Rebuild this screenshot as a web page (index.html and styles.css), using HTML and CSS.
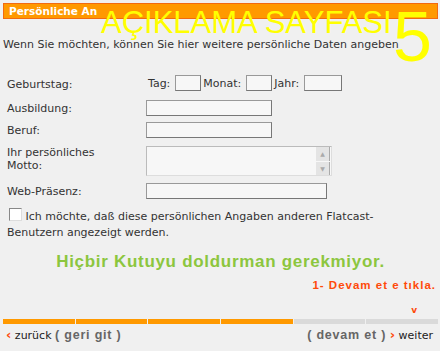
FILE: index.html
```html
<!DOCTYPE html>
<html lang="de">
<head>
  <meta charset="UTF-8">
  <title>Persönliche Angaben</title>
  <link rel="stylesheet" href="styles.css">
</head>
<body>
  <div class="page">
    <div class="titlebar">
      <span class="title">Persönliche An</span>
      <span class="overlay-title">AÇIKLAMA SAYFASI</span>
      <span class="overlay-step">5</span>
    </div>

    <p class="intro">Wenn Sie möchten, können Sie hier weitere persönliche Daten angeben</p>

    <!-- Formular -->
    <form class="form">
      <label>Geburtstag:</label>
      <div class="birth">
        <span>Tag:</span><input type="text" class="box-s">
        <span>Monat:</span><input type="text" class="box-s">
        <span>Jahr:</span><input type="text" class="box-m">
      </div>

      <label>Ausbildung:</label>
      <input type="text" class="box-l">

      <label>Beruf:</label>
      <input type="text" class="box-l">

      <label class="two-line">Ihr persönliches Motto:</label>
      <div class="motto">
        <div class="motto-field"></div>
        <div class="scroll">
          <span class="scroll-btn">▲</span>
          <span class="scroll-btn">▼</span>
        </div>
      </div>

      <label>Web-Präsenz:</label>
      <input type="text" class="box-xl">
    </form>

    <p class="consent"><span class="check"></span> Ich möchte, daß diese persönlichen Angaben anderen Flatcast-Benutzern angezeigt werden.</p>

    <p class="hint">Hiçbir Kutuyu doldurman gerekmiyor.</p>
    <p class="step">1- Devam et e tıkla.</p>

    <div class="marker">v</div>
    <div class="progress">
      <span class="seg done"></span>
      <span class="seg done"></span>
      <span class="seg done"></span>
      <span class="seg done"></span>
      <span class="seg"></span>
      <span class="seg"></span>
    </div>

    <div class="nav">
      <div><span class="chev">‹</span> zurück <b class="tr">( geri git )</b></div>
      <div><b class="tr">( devam et )</b> <span class="chev">›</span> weiter</div>
    </div>
  </div>
</body>
</html>
```

FILE: styles.css
```css
body {
  margin: 0;
  background: #f0f0f0;
  color: #333;
  font-family: "DejaVu Sans", Verdana, sans-serif;
  font-size: 11px;
  overflow: hidden;
}
.page {
  width: 435px;
  padding: 3px 2px 0 3px;
}
.titlebar {
  position: relative;
  height: 14px;
  background: #ff9900;
  border: 1px solid #f26a10;
  line-height: 14px;
}
.title {
  margin-left: 5px;
  color: #fff;
  font-weight: bold;
  font-size: 10.5px;
}
.overlay-title {
  position: absolute;
  left: 97px;
  top: 1px;
  color: #ffff00;
  font-family: "Liberation Sans", Arial, sans-serif;
  font-size: 31px;
  line-height: 36px;
  white-space: nowrap;
}
.overlay-step {
  position: absolute;
  left: 389px;
  top: -7px;
  width: 40px;
  color: #ffff00;
  font-family: "Liberation Sans", Arial, sans-serif;
  font-size: 70px;
  line-height: 80px;
}
.intro {
  margin: 19px 0 0;
  line-height: 14px;
  white-space: nowrap;
}
.form {
  display: grid;
  grid-template-columns: 139px 1fr;
  row-gap: 6px;
  align-items: center;
  margin-top: 23px;
  padding-left: 4px;
}
.form label {
  line-height: 13px;
}
.form .two-line {
  width: 100px;
  align-self: start;
  margin-top: 2px;
}
input {
  height: 16px;
  margin: 0;
  padding: 0;
  box-sizing: border-box;
  background: #f7f7f7;
  border: 1px solid #999;
  border-right-color: #777;
  border-bottom-color: #777;
}
.birth {
  display: flex;
  align-items: center;
  gap: 2px;
  margin-left: 2px;
  margin-bottom: 3px;
}
.birth span {
  margin-right: 3px;
}
.box-s { width: 26px; }
.box-m { width: 38px; }
.box-l { width: 126px; }
.box-xl { width: 181px; }
.motto {
  display: flex;
  width: 186px;
  height: 30px;
  margin: 2px 0 1px;
  box-sizing: border-box;
  background: #f7f7f7;
  border: 1px solid #bbb;
  border-right-color: #ddd;
  border-bottom-color: #ddd;
}
.motto-field {
  flex: 1;
}
.scroll {
  display: flex;
  flex-direction: column;
  gap: 1px;
  width: 14px;
  margin-right: 1px;
}
.scroll-btn {
  flex: 1;
  background: #e4e4e4;
  border-right: 1px solid #aaa;
  color: #aaa;
  font-size: 6px;
  text-align: center;
  line-height: 13px;
}
.consent {
  margin: 9px 0 0 4px;
  width: 400px;
  line-height: 16px;
}
.check {
  display: inline-block;
  width: 11px;
  height: 11px;
  margin-left: 2px;
  vertical-align: -1px;
  border: 1px solid #888;
  border-right-color: #ddd;
  border-bottom-color: #ddd;
  background: #fff;
}
.hint {
  margin: 11px 0 0;
  text-align: center;
  color: #8cc63e;
  font-family: "Liberation Sans", Arial, sans-serif;
  font-weight: bold;
  font-size: 17px;
  letter-spacing: 0.7px;
}
.step {
  margin: 7px 2px 0 0;
  text-align: right;
  color: #ff4a0a;
  font-family: "Liberation Sans", Arial, sans-serif;
  font-weight: bold;
  font-size: 11.5px;
  letter-spacing: 1px;
}
.marker {
  margin: 15px 21px 0 0;
  text-align: right;
  color: #ff4a0a;
  font-weight: bold;
  font-size: 9px;
  line-height: 9px;
}
.progress {
  display: flex;
  gap: 1px;
  margin-top: 4px;
  height: 5px;
}
.seg {
  flex: 1;
  background: #dadada;
}
.seg.done {
  background: #ff9900;
}
.nav {
  display: flex;
  justify-content: space-between;
  margin: 3px 5px 0 3px;
  line-height: 16px;
  color: #222;
}
.chev {
  color: #ff4a0a;
  font-weight: bold;
  font-size: 13px;
}
.tr {
  color: #666;
  font-family: "Liberation Sans", Arial, sans-serif;
  font-size: 12.5px;
  letter-spacing: 0.8px;
}
```
